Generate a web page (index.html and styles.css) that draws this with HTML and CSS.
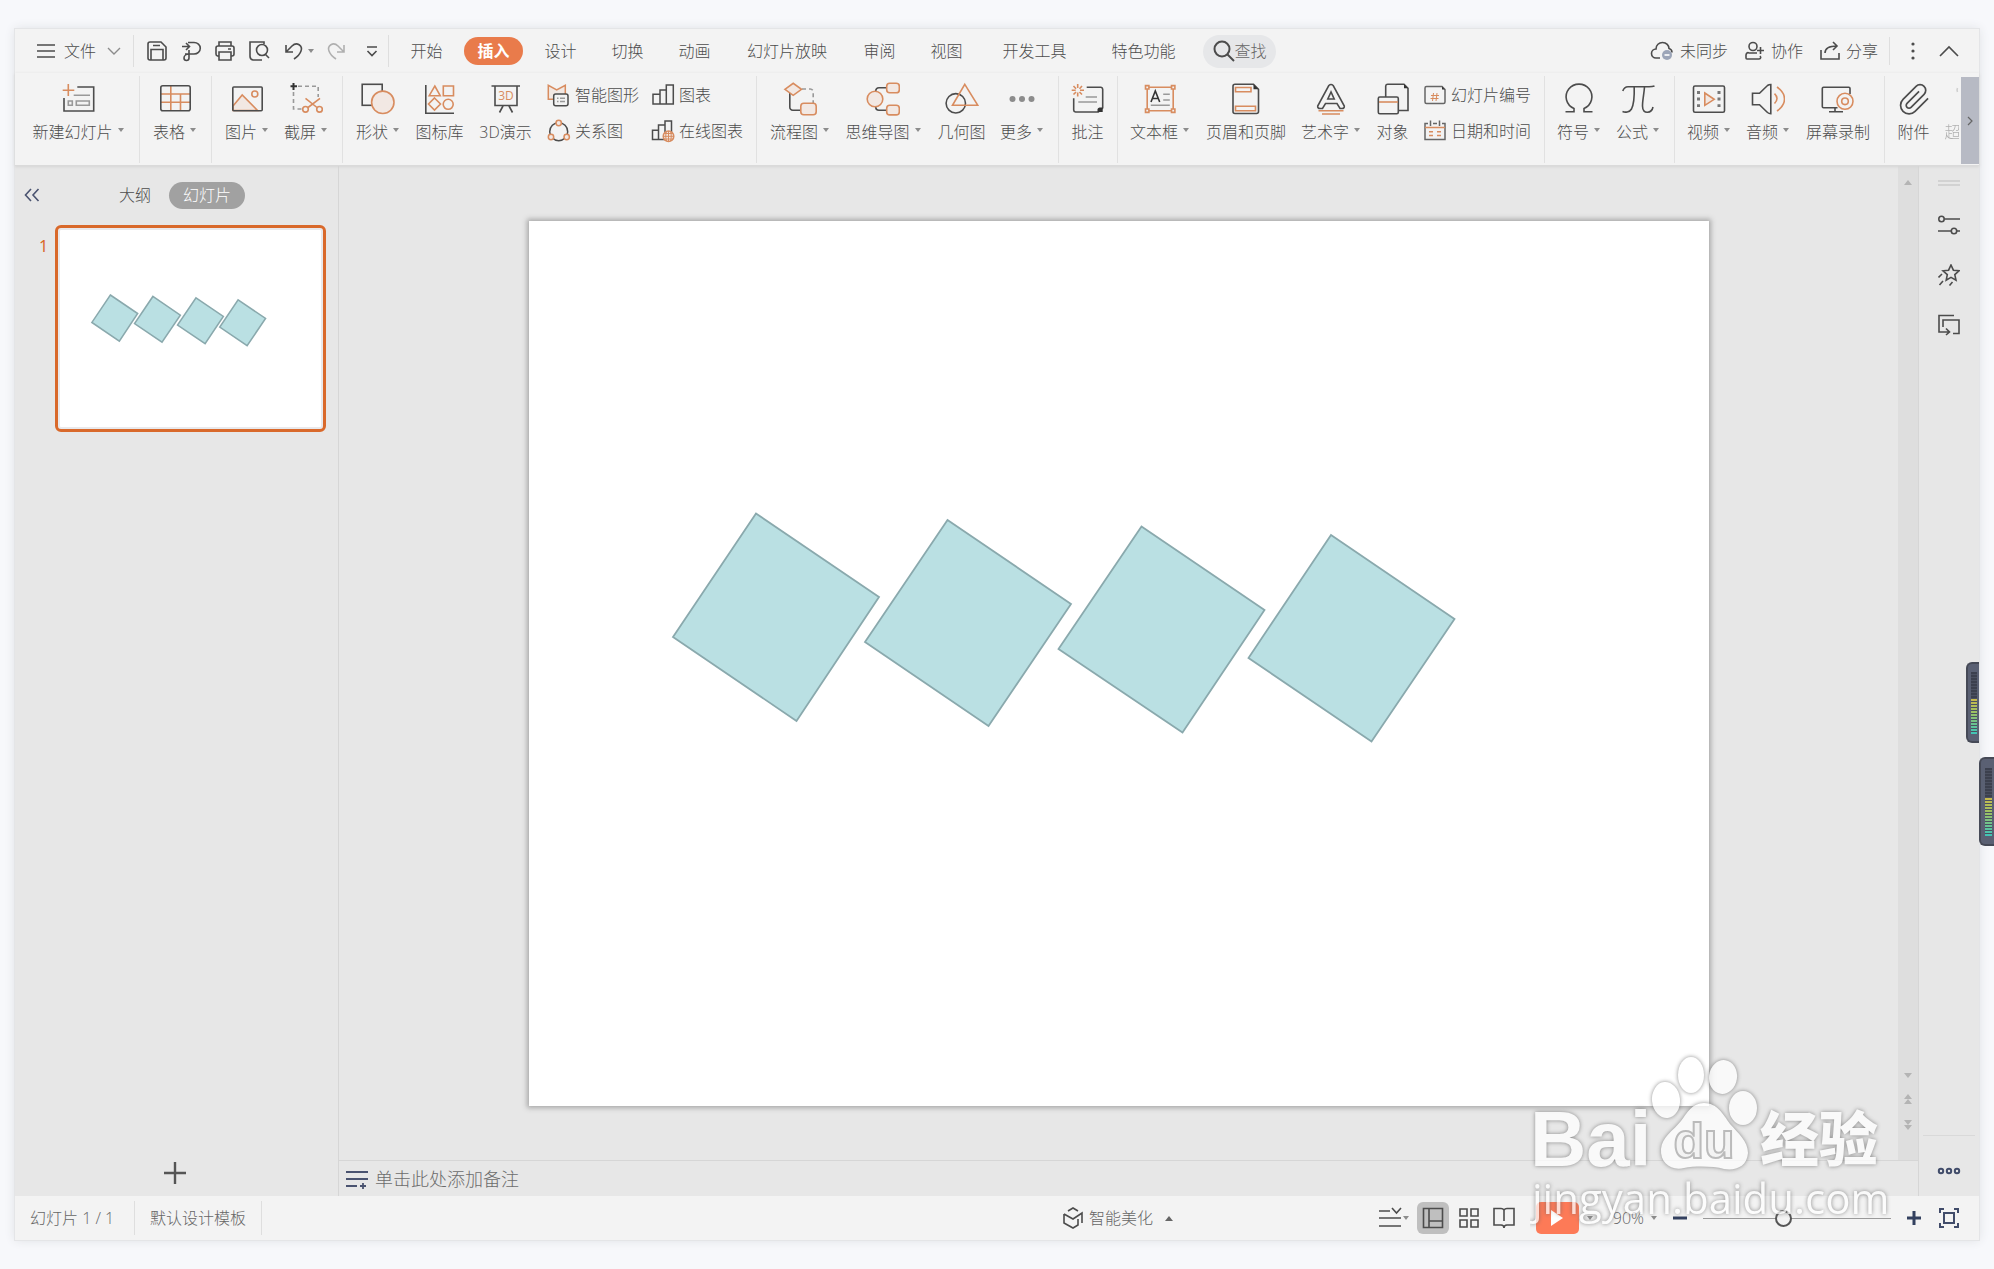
FILE: index.html
```html
<!DOCTYPE html>
<html lang="zh-CN">
<head>
<meta charset="utf-8">
<title>演示文稿</title>
<link rel="stylesheet" href="styles.css">
</head>
<body>
<svg class="defs" aria-hidden="true">
  <symbol id="slide-art" viewBox="0 0 1179 885">
    <path d="M226.500 292.500L349.500 376L267 500L143.500 416Z"/>
    <path d="M418 299L541.500 383L459 505L335.500 421Z"/>
    <path d="M612 305.500L735 389L653 511.500L529 428Z"/>
    <path d="M801.500 314L925 398L842 520.500L719 437Z"/>
  </symbol>
</svg>

<div class="window">
  <header class="menubar">
    <button class="file"><svg width="20" height="16" viewBox="0 0 20 16"><path d="M1 2H19M1 8H19M1 14H19"/></svg>文件<svg class="thin" width="14" height="10" viewBox="0 0 14 10"><path d="M1 2L7 8L13 2"/></svg></button>
    <div class="quick">
      <button aria-label="保存"><svg width="22" height="22" viewBox="0 0 22 22"><path d="M2 4a2 2 0 0 1 2-2H15L20 7V18a2 2 0 0 1-2 2H4a2 2 0 0 1-2-2ZM5 20V9.500H17V20M7 5.500H14"/></svg></button>
      <button aria-label="输出为PDF"><svg width="22" height="22" viewBox="0 0 22 22"><path d="M2 6.500H9M6 3L9.500 6.500L6 10M8 2.500H14a6 5.500 0 0 1 0 11.500H5M9 10V18a2 2 0 0 1-5 0c0-2 2-4 5-4"/></svg></button>
      <button aria-label="打印"><svg width="22" height="22" viewBox="0 0 22 22"><path d="M5 6V2H17V6M5 16H3.500A2 2 0 0 1 2 14V8a2 2 0 0 1 2-2H18a2 2 0 0 1 2 2V14a2 2 0 0 1-2 2H17M5 12H17V20H5ZM14 9H17"/></svg></button>
      <button aria-label="打印预览"><svg width="22" height="22" viewBox="0 0 22 22"><path d="M16 4V2H2V16a4 4 0 0 0 3 4H14"/><circle cx="14" cy="10" r="5.500"/><path d="M17 14L21 18"/></svg></button>
      <button aria-label="撤销" class="undo"><svg width="20" height="22" viewBox="0 0 20 22"><path d="M2 5V12H9M2 12L8 6c5-5 11 0 9 5c-1 3-4 6-7 8"/></svg><i class="caret"></i></button>
      <button aria-label="恢复" class="off"><svg width="20" height="22" viewBox="0 0 20 22"><path d="M18 5V12H11M18 12L12 6C7 1 1 6 3 11c1 3 4 6 7 8"/></svg></button>
      <button aria-label="自定义" class="customize"><svg width="12" height="14" viewBox="0 0 12 14"><path d="M1 3H11M1.500 7L6 11.500L10.500 7"/></svg></button>
    </div>
    <nav class="tabs">
      <button>开始</button><button class="active">插入</button><button>设计</button><button>切换</button><button>动画</button><button class="show">幻灯片放映</button><button>审阅</button><button>视图</button><button class="wide">开发工具</button><button class="wide">特色功能</button>
    </nav>
    <button class="search"><svg width="22" height="22" viewBox="0 0 22 22"><circle cx="9" cy="9" r="7.500"/><path d="M14.500 14.500L21 21"/></svg>查找</button>
    <div class="account">
      <button><svg width="24" height="20" viewBox="0 0 24 20"><path d="M10 17H6a4.500 4.500 0 0 1 0-9C6 4 9 1.500 12.500 1.500C16.500 1.500 19 4.500 19 7.500c2 .5 3 2 3 4"/><circle class="badge" cx="17" cy="14" r="5"/><path class="minus" d="M14.500 14H19.500"/></svg>未同步</button>
      <button><svg width="20" height="20" viewBox="0 0 20 20"><circle cx="8" cy="5.500" r="4"/><path d="M12 12H4a2 3 0 0 0-3 3v2a1 1 0 0 0 1 1H14c2 0 2-2 1-3M12 9.500H19M15.500 6V13"/></svg>协作</button>
      <button><svg width="20" height="20" viewBox="0 0 20 20"><path d="M1 9V18H19V12M5 12C5 7 9 5 17 5M13 1L17 5L13 9"/></svg>分享</button>
    </div>
    <button class="dots" aria-label="更多选项"><svg width="6" height="20" viewBox="0 0 6 20"><circle class="dot" cx="3" cy="3" r="1.600"/><circle class="dot" cx="3" cy="10" r="1.600"/><circle class="dot" cx="3" cy="17" r="1.600"/></svg></button>
    <button class="fold" aria-label="折叠功能区"><svg width="20" height="12" viewBox="0 0 20 12"><path d="M1 11L10 2L19 11"/></svg></button>
  </header>

  <div class="ribbon">
    <div class="groups">
      <section>
        <button class="tool c5 drop"><svg viewBox="0 0 34 34"><path d="M16.300 5H32.700V29H3V16"/><path class="o" d="M1.700 8.300H13.300M7.300 2V14"/><path class="g" d="M12.700 13.300H29M7.300 19h4v4.300h-4ZM15.300 19h13v4.300h-13Z"/></svg><span>新建幻灯片<i class="caret"></i></span></button>
      </section>
      <section>
        <button class="tool c2 drop"><svg viewBox="0 0 34 34"><path class="o" d="M12.800 4V28.500M22.500 12V28.500M3 12H32M3 20.300H32"/><rect x="2.800" y="3.700" width="29.400" height="25" rx="2"/></svg><span>表格<i class="caret"></i></span></button>
      </section>
      <section>
        <button class="tool c2 drop"><svg viewBox="0 0 34 34"><path class="o f" d="M3 24L12.200 13L27.500 28.500H3Z"/><circle class="o" cx="24.800" cy="12" r="3"/><rect x="2.800" y="5" width="29.400" height="23.700" rx="1"/></svg><span>图片<i class="caret"></i></span></button>
        <button class="tool c2 drop"><svg viewBox="0 0 34 34"><path class="g" stroke-dasharray="4 3" d="M9 4.300H29.200V15M4.500 10V27H14"/><path class="k" d="M1.500 4.300H8M4.500 1V8"/><path class="o" d="M16.500 16.300L28 25.500M31 16.300L19 25.500"/><circle class="o" cx="16.500" cy="27.300" r="2.800"/><circle class="o" cx="30.500" cy="27.300" r="2.800"/></svg><span>截屏<i class="caret"></i></span></button>
      </section>
      <section>
        <button class="tool c2 drop"><svg viewBox="0 0 34 34"><rect x="1.200" y="2.300" width="20" height="21"/><circle class="o f" cx="21.800" cy="20.300" r="11.200"/></svg><span>形状<i class="caret"></i></span></button>
        <button class="tool c3"><svg viewBox="0 0 34 34"><path d="M2.800 3V31.300H31"/><path class="o" d="M11.800 4L17.200 13.700H6.200ZM20.300 4H30.500V13.700H20.300ZM11.500 16L17.500 22L11.500 28L5.500 22Z"/><circle class="o" cx="25.200" cy="22.300" r="5"/></svg><span>图标库</span></button>
        <button class="tool c3d"><svg viewBox="0 0 34 34"><path d="M2.500 4H31M6 4V23.500H28V4M14 24L10.500 30.500M20 24L23.500 30.500"/><text class="t3d" x="17" y="18" text-anchor="middle">3D</text></svg><span>3D演示</span></button>
        <div class="minis">
          <button><svg viewBox="0 0 24 24"><path class="o f" d="M6.500 16.300H1.300V2.300L9.700 7L18.300 2.300V11"/><rect class="bgf" x="6.700" y="11" width="14.300" height="11.700" rx="2"/><path class="g" d="M10 15.300H11.500M13 15.300H18M10 18.500H11.500M13 18.500H18"/></svg>智能图形</button>
          <button><svg viewBox="0 0 24 24"><path d="M2 21V11.300H9V21ZM9 11.300V7H15.300V21H9ZM15.300 9V2H22.300V21H15.300Z"/></svg>图表</button>
          <button><svg viewBox="0 0 24 24"><circle cx="11.700" cy="12.700" r="9"/><circle class="o f" cx="11.700" cy="4" r="2.700"/><circle class="o f" cx="4" cy="18" r="2.700"/><circle class="o f" cx="19.700" cy="18" r="2.700"/></svg>关系图</button>
          <button><svg viewBox="0 0 24 24"><path d="M1.500 20.500V11.300H7.500V20.500ZM7.500 11.300V6H14V20.500H7.500ZM14 9V2H20.500V20.500H14Z"/><circle class="o f" cx="17.500" cy="17.300" r="5.300"/><path class="o hair" d="M12.300 17.300H22.700M17.500 12V22.600M13.200 14.500H21.800M13.200 20H21.800M15.500 12.500C14.500 15 14.500 19 15.500 22M19.500 12.500C20.500 15 20.500 19 19.500 22"/></svg>在线图表</button>
        </div>
      </section>
      <section>
        <button class="tool c3 drop"><svg viewBox="0 0 34 34"><path d="M6.800 11V25a3 3 0 0 0 3 3.300H17.500"/><path class="g" stroke-dasharray="4 3" d="M19 7H27a3 3 0 0 1 3.200 3V21"/><path class="o f" d="M1.900 7.300L10.200 1.300L18.500 7.300L10.200 13.300Z"/><rect class="o f" x="17.800" y="21.300" width="15.400" height="11.500" rx="3"/></svg><span>流程图<i class="caret"></i></span></button>
        <button class="tool c4 drop"><svg viewBox="0 0 34 34"><path d="M9.700 9.500C9.700 7 11 5.700 13 5.700H20.700M9.700 24.500C9.700 27 11 28.300 13 28.300H20.700"/><circle class="o f" cx="9" cy="17" r="7.800"/><rect class="o f" x="20.700" y="1.200" width="12.600" height="9.600" rx="3"/><rect class="o f" x="20.700" y="23.300" width="12.600" height="9.600" rx="3"/></svg><span>思维导图<i class="caret"></i></span></button>
        <button class="tool c3"><svg viewBox="0 0 34 34"><circle cx="10.800" cy="21.300" r="9.700"/><path class="o" d="M19.800 2.300L32.800 23.300H7.500Z"/></svg><span>几何图</span></button>
        <button class="tool c2 drop"><svg viewBox="0 0 34 34"><circle class="gd" cx="7.500" cy="17" r="3"/><circle class="gd" cx="17" cy="17" r="3"/><circle class="gd" cx="26.500" cy="17" r="3"/></svg><span>更多<i class="caret"></i></span></button>
      </section>
      <section>
        <button class="tool c2n"><svg viewBox="0 0 34 34"><path d="M15.700 5.300H30a2 2 0 0 1 1.700 2V26L27.300 30H4.500a2 2 0 0 1-1.800-2V16.300"/><path class="solid" d="M31.700 25.500V30H26.500V27.500Q26.500 26 28.500 25.500Z"/><path class="g" d="M14.700 15H26M7.300 20H26"/><path class="o" d="M6.700 2V6M6.700 10.500V14.500M.7 8.300H4.700M9 8.300H13M2.500 4L5 6.700M8.500 10L11 12.500M11 4L8.500 6.700M5 10L2.500 12.500"/></svg><span>批注</span></button>
      </section>
      <section>
        <button class="tool c3 drop"><svg viewBox="0 0 34 34"><path class="o" d="M4.200 5.300H30.200V28.700H4.200Z"/><path class="o bgf" d="M2.500 3.600h3.400V7h-3.400ZM28.500 3.600h3.400V7h-3.400ZM2.500 27h3.400v3.400h-3.400ZM28.500 27h3.400v3.400h-3.400Z"/><path class="a" d="M8 20L12.300 9L16.700 20M9.500 16.500H15"/><path class="g" d="M20.200 12.300H26.800M20.200 18H26.800M7.800 23.300H26.800"/></svg><span>文本框<i class="caret"></i></span></button>
        <button class="tool c5n"><svg viewBox="0 0 34 34"><path d="M24.500 2.300H6a2 2 0 0 0-2 2V29.500a2 2 0 0 0 2 2H27.500a2 2 0 0 0 2-2V7.300Z"/><path class="solid" d="M24.500 2.300V7.300H29.500Z"/><path class="o" d="M6.500 5.500H22V9.700H6.500ZM6.500 24.300H26.500V28.700H6.500Z"/></svg><span>页眉和页脚</span></button>
        <button class="tool c3 drop"><svg viewBox="0 0 34 34"><path d="M14.800 3.500Q17 1.500 19.200 3.500L30.300 24Q30.500 26.500 28 26.500H26L23 21.500H11.500L8.500 26.500H6Q3.500 26.500 3.700 24ZM17 10L13.800 17H20.200Z"/><path class="o" d="M4.500 28.700H29.500M8 32H26"/></svg><span>艺术字<i class="caret"></i></span></button>
        <button class="tool c2n"><svg viewBox="0 0 34 34"><path d="M9.700 15V4a2 2 0 0 1 2-1.700H28L32 6.300V28.500H22.500"/><path class="solid" d="M28 2.300V6.300H32Z"/><rect x="2.300" y="15" width="20" height="16.700" rx="1.500"/><path class="o" d="M3 20H22"/></svg><span>对象</span></button>
        <div class="minis one">
          <button><svg viewBox="0 0 24 24"><path class="m" d="M19 3.500H3.500a1.500 1.500 0 0 0-1.500 1.500V19a1.500 1.500 0 0 0 1.500 1.500H20.500a1.500 1.500 0 0 0 1.500-1.500V6.500Z"/><path class="solid" d="M19 3.500V6.500H22Z"/><path class="o hair" d="M10.500 10L9.500 18M14 10L13 18M8 12.500H16M7.500 15.500H15.500"/></svg>幻灯片编号</button>
          <button><svg viewBox="0 0 24 24"><path class="m" d="M5 4.500H2V20.500H22V4.500H19M10 4.500H14M7.500 1.500V7M16.500 1.500V7"/><path class="o" d="M2 8.500H22M6 12.700H10M14 12.700H18M6 16.500H10M14 16.500H18"/></svg>日期和时间</button>
        </div>
      </section>
      <section>
        <button class="tool c2 drop"><svg viewBox="0 0 34 34"><path d="M3.500 29.700H12V26.500A12.900 12.700 0 1 1 22 26.500V29.700H30.500"/></svg><span>符号<i class="caret"></i></span></button>
        <button class="tool c2 drop"><svg viewBox="0 0 34 34"><path d="M1.800 9C3 5.500 4.500 4.700 7 4.700H28Q31.500 4.700 33.500 4M13.200 5C13.500 15 13 22 10.500 27C8.500 30.500 4 30.500 1.500 29.500M23.500 5C23 12 21.500 18 21.500 24C21.500 29 24 30.500 26.500 30.300C30 30 31.500 27.500 32 25"/></svg><span>公式<i class="caret"></i></span></button>
      </section>
      <section>
        <button class="tool c2 drop"><svg viewBox="0 0 34 34"><rect x="1.500" y="4" width="31" height="26.300" rx="1.500"/><path class="dotted" d="M6.500 9V25M27 9V25"/><path class="o f" d="M12.800 11L22.200 17.300L12.800 23.300Z"/></svg><span>视频<i class="caret"></i></span></button>
        <button class="tool c2 drop"><svg viewBox="0 0 34 34"><path d="M1.500 11.300H8.500L16.500 3.500Q18 2.500 19.800 2.500V31.700Q18 31.700 16.500 30.500L8.500 22.700H1.500Z"/><path class="o" d="M23.500 11.700Q28.500 16.500 23.500 21.500M26 5C36 12 36 22 26 29"/></svg><span>音频<i class="caret"></i></span></button>
        <button class="tool c4n"><svg viewBox="0 0 34 34"><path d="M29 12V6.500a1.200 1.200 0 0 0-1.200-1.200H2.500A1.200 1.200 0 0 0 1.300 6.500V24.500A1.200 1.200 0 0 0 2.500 25.700H16.500M14 26V29.500M8 29.700H22"/><circle class="o" cx="24" cy="19.300" r="8"/><circle class="o" cx="24" cy="19.300" r="3.300"/></svg><span>屏幕录制</span></button>
      </section>
      <section>
        <button class="tool c2n"><svg viewBox="-.5 -.5 24 24"><path class="clip" d="M21.440 11.050l-9.190 9.190a6 6 0 0 1-8.490-8.490l9.190-9.190a4 4 0 0 1 5.660 5.660l-9.200 9.190a2 2 0 0 1-2.830-2.830l8.490-8.480"/></svg><span>附件</span></button>
        <button class="tool c3 cut"><svg viewBox="0 0 34 34"><path class="g" d="M5.500 6Q4.500 8 5.500 10"/></svg><span>超链接</span></button>
      </section>
    </div>
    <button class="scroll" aria-label="向右滚动"><svg width="6" height="10" viewBox="0 0 6 10"><path d="M1 1L5 5L1 9"/></svg></button>
  </div>

  <main>
    <aside class="outline">
      <div class="outline-head">
        <button class="collapse" aria-label="收起"><svg width="16" height="14" viewBox="0 0 16 14"><path d="M7 1L1.500 7L7 13M14.500 1L9 7L14.500 13"/></svg></button>
        <button>大纲</button><button class="pill">幻灯片</button>
      </div>
      <div class="thumb-row"><span>1</span><button class="thumb" aria-label="幻灯片 1"><svg class="art" viewBox="0 0 1179 885"><use href="#slide-art"/></svg></button></div>
      <button class="add" aria-label="新建幻灯片"><svg width="22" height="22" viewBox="0 0 22 22"><path d="M11 0V22M0 11H22"/></svg></button>
    </aside>
    <div class="editor">
      <div class="canvas">
        <div class="stage"><div class="slide"><svg class="art" viewBox="0 0 1179 885"><use href="#slide-art"/></svg></div></div>
        <div class="vscroll"><svg width="8" height="5" viewBox="0 0 8 5"><path d="M0 5L4 0L8 5Z"/></svg><svg class="down" width="8" height="5" viewBox="0 0 8 5"><path d="M0 0L4 5L8 0Z"/></svg><svg width="8" height="10" viewBox="0 0 8 10"><path d="M0 5L4 0L8 5ZM0 10L4 5L8 10Z"/></svg><svg width="8" height="10" viewBox="0 0 8 10"><path d="M0 0L4 5L8 0ZM0 5L4 10L8 5Z"/></svg></div>
      </div>
      <div class="notes"><label for="notes"><svg width="22" height="18" viewBox="0 0 22 18"><path d="M0 2H22M0 9H22M0 16H11M14 16H20M17 13V19"/></svg></label><input id="notes" aria-label="备注" placeholder="单击此处添加备注"></div>
    </div>
    <aside class="tools">
      <svg width="22" height="6" viewBox="0 0 22 6"><path class="grip" d="M0 1H22M0 5H22"/></svg>
      <button aria-label="属性"><svg width="22" height="22" viewBox="0 0 22 22"><circle cx="3.500" cy="5" r="2.700"/><path d="M6.500 5H22M0 17H13M19 17H22"/><circle cx="16" cy="17" r="2.700"/></svg></button>
      <button aria-label="动画"><svg width="22" height="22" viewBox="0 0 22 22"><path d="M13 1L15.400 6.200L21 6.800L16.800 10.600L18 16.200L13 13.400L8.200 16.200L9.300 10.600L5 6.800L10.600 6.200ZM4 10L.5 13.500M5 17L1.500 21M14.500 18L11.500 21.500"/></svg></button>
      <button aria-label="切换"><svg width="22" height="22" viewBox="0 0 22 22"><path d="M16 1.500H1V18H11M8 14.500L11.500 18L8 21M5 13V6H21V19.500H15"/></svg></button>
      <button class="more" aria-label="更多"><svg width="24" height="8" viewBox="0 0 24 8"><circle cx="4" cy="4" r="2.200"/><circle cx="12" cy="4" r="2.200"/><circle cx="20" cy="4" r="2.200"/></svg></button>
    </aside>
  </main>

  <footer>
    <span class="cell first">幻灯片 1 / 1</span><span class="cell">默认设计模板</span>
    <button class="beauty"><svg width="20" height="22" viewBox="0 0 20 22"><path d="M5 4L10 1L15 4M1 7V16L10 21L15 18V12M1 7L10 12L19 6V16"/></svg>智能美化<i class="caret up"></i></button>
    <div class="views">
      <button class="notes-toggle" aria-label="备注"><svg width="24" height="22" viewBox="0 0 24 22"><path d="M0 4H11M13 1L17.500 6L22 1M0 11H22M0 19H22"/></svg><i class="caret"></i></button>
      <button class="on" aria-label="普通视图"><svg width="22" height="22" viewBox="0 0 22 22"><path d="M1.500 1.500H20.500V20.500H1.500ZM7 1.500V20.500M7 14H20.500"/></svg></button>
      <button aria-label="幻灯片浏览"><svg width="20" height="20" viewBox="0 0 20 20"><path d="M1 1H8V8H1ZM12 1H19V8H12ZM1 12H8V19H1ZM12 12H19V19H12Z"/></svg></button>
      <button class="book" aria-label="阅读视图"><svg width="22" height="22" viewBox="0 0 22 22"><path d="M11 3Q10 1.500 8 1.500H1V18H8Q11 18 11 21Q11 18 14 18H21V1.500H14Q12 1.500 11 3V14"/></svg></button>
      <button class="play" aria-label="放映"><svg width="12" height="16" viewBox="0 0 12 16"><path d="M0 0L12 8L0 16Z"/></svg></button>
      <i class="caret"></i>
      <button class="percent">90%<i class="caret"></i></button>
      <button class="zoom" aria-label="缩小"><svg width="14" height="14" viewBox="0 0 14 14"><path d="M0 7H14"/></svg></button>
      <input class="slider" type="range" min="0" max="100" value="42" aria-label="缩放">
      <button class="zoom" aria-label="放大"><svg width="14" height="14" viewBox="0 0 14 14"><path d="M0 7H14M7 0V14"/></svg></button>
      <button class="fit" aria-label="适应窗口"><svg width="20" height="20" viewBox="0 0 20 20"><path d="M1 5V1H5M15 1H19V5M19 15V19H15M5 19H1V15M5 5H15V15H5Z"/></svg></button>
    </div>
  </footer>
  <div class="meter inner"><i></i></div>
</div>
<div class="meter outer"><i></i></div>

<svg class="watermark" width="370" height="180" viewBox="0 0 370 180">
  <g>
    <ellipse cx="161" cy="25" rx="13" ry="18"/>
    <ellipse cx="193" cy="27" rx="14" ry="17" transform="rotate(8 193 27)"/>
    <ellipse cx="136" cy="50" rx="14" ry="18" transform="rotate(-6 136 50)"/>
    <ellipse cx="213" cy="58" rx="14" ry="17"/>
    <path d="M174 53C187 53 193 64 200 74C208 83 218 91 218 103C217 117 205 121 194 119C183 116 165 116 154 118C141 121 130 113 131 99C132 87 143 81 151 71C157 63 162 53 174 53Z"/>
    <text class="brand" x="0" y="116">Bai</text>
    <text class="cn" x="230" y="111">经验</text>
    <text class="url" x="2" y="164">jingyan.baidu.com</text>
  </g>
  <text class="du" x="174" y="108" text-anchor="middle">du</text>
</svg>
</body>
</html>
```
FILE: styles.css
```css
* { box-sizing: border-box; }
body {
  margin: 0;
  min-height: 100vh;
  padding: 29px 15px;
  display: flex;
  position: relative;
  overflow: hidden;
  background: #f7f8fb;
  color: #4c4c4c;
  font: 300 16px/20px "Open Sans", "Noto Sans CJK SC", sans-serif;
}
button, input { font: inherit; color: inherit; }
button {
  display: flex;
  align-items: center;
  justify-content: center;
  flex: none;
  padding: 0;
  border: 0;
  background: none;
  white-space: nowrap;
}
svg { display: block; flex: none; fill: none; stroke: #4c4c4c; stroke-width: 1.6; }
.defs { position: absolute; width: 0; height: 0; }
.window {
  position: relative;
  flex: 1;
  min-width: 0;
  display: flex;
  flex-direction: column;
  background: #e7e7e7;
  box-shadow: 0 0 0 1px #e4e5e7, 0 0 10px #dcdee2;
}
.caret {
  display: inline-block;
  border: 3px solid transparent;
  border-top: 4px solid #8c8c8c;
  border-bottom: 0;
}
.caret.up { border: 4px solid transparent; border-bottom: 5px solid #666; border-top: 0; }

/* menu bar */
.menubar { display: flex; align-items: center; height: 44px; background: #f3f3f3; padding-right: 20px; }
.file { height: 32px; gap: 8px; padding: 0 12px 0 21px; border-right: 1px solid #dedede; }
.file .thin { stroke: #8c8c8c; stroke-width: 1.4; margin-left: 3px; }
.quick { display: flex; align-items: center; gap: 12px; height: 32px; padding: 0 10px 0 12px; border-right: 1px solid #dedede; }
.undo { gap: 4px; margin-left: 2px; }
.off { opacity: .4; }
.customize { margin-left: 8px; }
.tabs { display: flex; align-items: center; padding-left: 4px; }
.tabs button { height: 28px; padding: 0 17px; min-width: 67px; }
.tabs .active { padding: 0 13px; margin: 0 4px; min-width: 59px; border-radius: 14px; background: #e97b4b; color: #fff; font-weight: 700; }
.tabs .show { min-width: 118px; }
.tabs .wide { min-width: 109px; }
.search { height: 33px; width: 73px; margin-left: 5px; border-radius: 17px; background: #e6e7e9; color: #666; }
.search svg { stroke-width: 2; }
.account { display: flex; gap: 17px; margin-left: auto; }
.account button { gap: 6px; }
.badge { fill: #9ca5b8; stroke: none; }
.minus { stroke: #fff; }
.dots { margin-left: 11px; padding-left: 20px; height: 28px; border-left: 1px solid #dedede; }
.dot { fill: #4c4c4c; stroke: none; }
.fold { margin-left: 23px; }

/* ribbon */
.ribbon { display: flex; height: 93px; background: #f3f3f3; border-bottom: 1px solid #dadada; box-shadow: 0 1px 3px #d4d4d4; position: relative; padding: 3px 0 2px; }
.groups { flex: 1; min-width: 0; display: flex; overflow: hidden; }
.groups section { display: flex; flex: none; align-items: flex-start; gap: 14px; padding: 6px 13px 0 12px; border-right: 1px solid #e1e1e1; }
.groups section:nth-child(-n+5) { padding-left: 13px; }
.groups section:first-child { padding-left: 17px; }
.groups section:last-child { border: 0; }
.tool { flex-direction: column; gap: 6px; }
.tool svg { width: 34px; height: 34px; }
.tool span { display: flex; align-items: center; justify-content: center; height: 20px; }
.tool .caret { margin: 0 0 4px 5px; }
.drop { margin-right: 2px; }
.c2 { width: 43px; }
.c2n { width: 33px; }
.c3 { width: 49px; }
.c3.drop { width: 59px; }
.c3d { width: 55px; }
.c4 { width: 76px; }
.c4n { width: 66px; }
.c5 { width: 92px; }
.c5n { width: 82px; }
.cut { opacity: .4; }
.o { stroke: #d88c5f; }
.f { fill: #f2e8e3; }
.g { stroke: #999; }
.k { stroke: #333; stroke-width: 2; }
.a { stroke: #333; }
.m { stroke: #666; }
.gd { fill: #8c8c8c; stroke: none; }
.solid { fill: #333; stroke: none; }
.bgf { fill: #f3f3f3; }
.hair { stroke-width: 1; }
.dotted { stroke: #777; stroke-width: 3; stroke-dasharray: 3 3.600; }
.clip { stroke-width: 1.2; }
.t3d { fill: #d88c5f; stroke: none; font: 400 12px "Open Sans", sans-serif; }
.minis { display: grid; grid-template-columns: auto auto; gap: 12px; padding-top: 1px; }
.minis.one { grid-template-columns: auto; }
.minis button { justify-content: flex-start; gap: 4px; height: 24px; }
.minis svg { width: 24px; height: 24px; stroke-width: 1.5; }
.scroll { width: 18px; height: 87px; margin-top: 1px; margin-left: 2px; background: #b7bac4; }
.scroll svg { stroke: #666; stroke-width: 1.2; }

/* workspace */
main { flex: 1; min-height: 0; display: flex; }
.outline { width: 324px; flex: none; display: flex; flex-direction: column; padding: 15px 12px 12px 9px; border-right: 1px solid #d6d6d6; }
.outline-head { display: flex; align-items: center; height: 28px; }
.collapse { margin-right: 79px; }
.collapse svg { stroke: #4a5370; }
.outline .pill { height: 27px; width: 76px; margin-left: 18px; border-radius: 14px; background: #a1a1a1; color: #fff; }
.thumb-row { display: flex; justify-content: space-between; margin-top: 16px; }
.thumb-row span { color: #d9692b; padding: 11px 0 0 15px; font: 400 16px/20px "Noto Sans", sans-serif; }
.thumb { width: 271px; height: 207px; border: 3px solid #d9692b; border-radius: 6px; background: #fff; box-shadow: inset 0 0 0 2px #e9e9ec; }
.thumb svg { width: 262px; }
.art { fill: #bae0e3; stroke: #8aa9ad; }
.thumb .art { stroke-width: 7; }
.add { margin: auto 0 0 140px; align-self: flex-start; }
.add svg { stroke: #555; stroke-width: 2.4; }
.editor { flex: 1; min-width: 0; display: flex; flex-direction: column; border-right: 1px solid #d6d6d6; }
.canvas { flex: 1; min-height: 0; display: flex; }
.stage { flex: 1; min-width: 0; display: flex; justify-content: center; padding: 55px 0 54px; }
.slide { height: 100%; aspect-ratio: 4 / 3; background: #fff; box-shadow: 0 0 5px 2px #a8a8a8; }
.slide svg { width: 100%; height: 100%; stroke-width: 1.8; }
.vscroll { width: 20px; display: flex; flex-direction: column; align-items: center; gap: 16px; padding: 14px 0 30px; background: #dedede; }
.vscroll svg { fill: #b4b4b4; stroke: none; }
.vscroll .down { margin-top: auto; }
.notes { height: 36px; flex: none; display: flex; align-items: center; gap: 7px; padding-left: 7px; border-top: 1px solid #d6d6d6; }
.notes svg { stroke: #4a5370; stroke-width: 1.8; overflow: visible; }
.notes input { flex: 1; height: 26px; padding: 0; border: 0; background: none; font-size: 18px; }
.notes input::placeholder { color: #6c6c6c; opacity: 1; }
.tools { width: 60px; flex: none; display: flex; flex-direction: column; align-items: center; padding: 14px 0 21px; }
.tools button { margin-top: 28px; }
.tools .grip { stroke: #ccc; }
.tools .more { margin-top: auto; width: 52px; height: 40px; padding-top: 36px; border-top: 1px solid #d9d9d9; align-items: flex-end; }
.more svg { stroke: #414c6a; stroke-width: 2; }

/* status bar */
footer { height: 44px; flex: none; display: flex; align-items: center; background: #f3f3f3; color: #666; }
.cell { height: 34px; line-height: 34px; padding: 0 15px; border-right: 1px solid #dedede; }
.cell.first { width: 120px; }
.beauty { gap: 6px; margin-left: calc(50% - 181px); }
.beauty .caret { margin-left: 6px; }
.views { display: flex; align-items: center; margin-left: auto; padding-right: 20px; }
.views button { height: 32px; }
.views .on { width: 32px; margin: 0 10px 0 8px; border-radius: 6px; background: #bfbfbf; }
.views .book { margin: 0 21px 0 14px; }
.views .play { width: 43px; margin-right: 8px; border-radius: 5px; background: #fd7a57; }
.play svg { fill: #fff; stroke: none; }
.percent { gap: 7px; margin: 0 16px 0 20px; }
.zoom svg { stroke: #33405f; stroke-width: 3; }
.fit { margin-left: 18px; }
.fit svg { stroke: #414c6a; stroke-width: 2; }
.slider { appearance: none; width: 188px; height: 18px; margin: 0 16px; background: linear-gradient(#999, #999) center / 100% 1px no-repeat; }
.slider::-webkit-slider-thumb { appearance: none; width: 17px; height: 17px; border: 2px solid #555; border-radius: 50%; background: #f3f3f3; }

/* level meters docked on the edge */
.meter { position: absolute; right: 0; border: 2px solid #454956; border-right: 0; border-radius: 6px 0 0 6px; background: #5a6073; }
.meter i { display: block; height: 100%; background: repeating-linear-gradient(transparent 0 2px, #4b5060 2px 3px), linear-gradient(#3c404e 44%, #c9b94b 44%, #9cc063 65%, #3fc4b8); }
.meter.inner { width: 13px; height: 81px; top: 633px; padding: 8px 2px 7px 3px; }
.meter.outer { width: 15px; height: 89px; top: 757px; padding: 9px 2px 8px 4px; }

/* site watermark */
.watermark { position: absolute; right: 94px; bottom: 39px; pointer-events: none; fill: #fff; stroke: none; }
.watermark g { opacity: .75; filter: drop-shadow(0 0 2px #666); }
.brand { font: 700 78px "Liberation Sans", sans-serif; }
.cn { font: 900 59px "Noto Sans CJK SC", sans-serif; }
.url { font: 400 42px "Open Sans", sans-serif; }
.du { font: 700 50px "Liberation Sans", sans-serif; fill: #f3f3f3; stroke: #bbb; stroke-width: 2; }
```
